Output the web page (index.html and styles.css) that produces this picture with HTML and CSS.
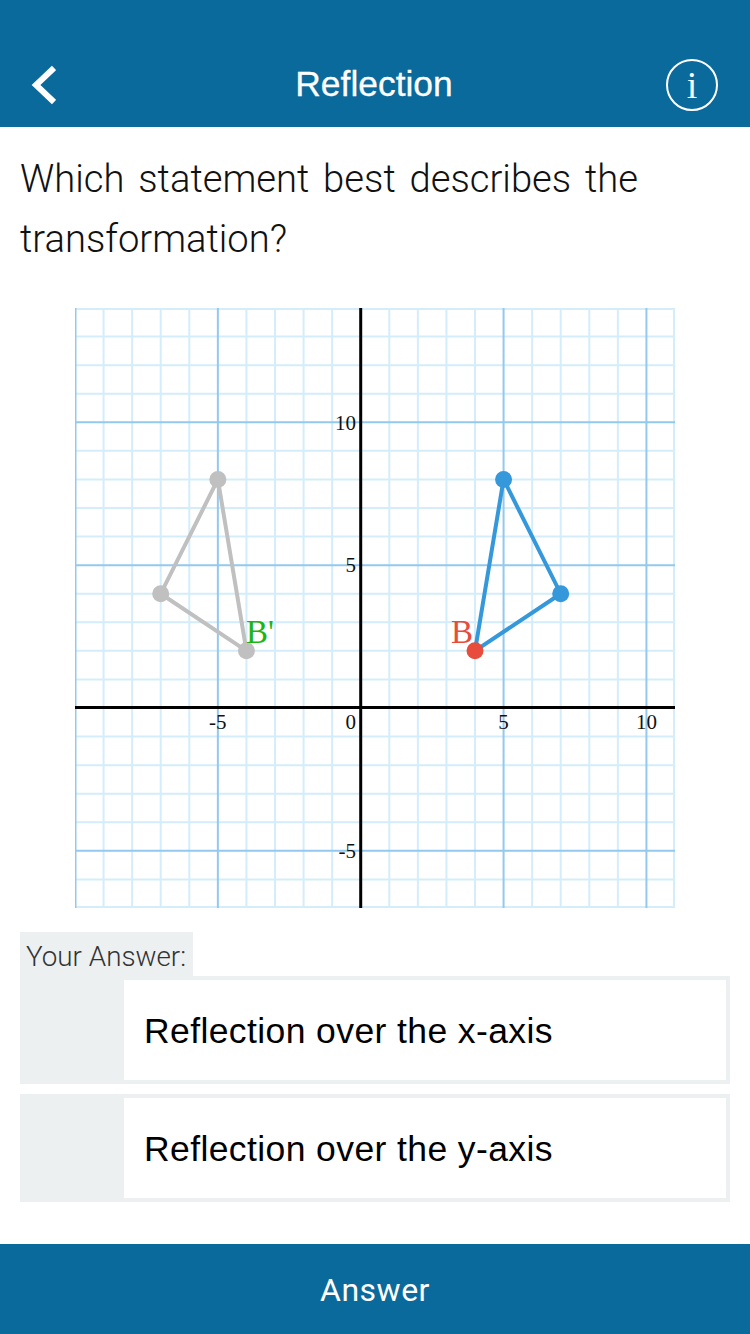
FILE: index.html
```html
<!DOCTYPE html>
<html lang="en">
<head>
    <meta charset="UTF-8">
    <meta name="viewport" content="width=device-width, initial-scale=1.0">
    <title>Reflection</title>
    <link rel="stylesheet" href="styles.css">
</head>
<body>
    <header class="topbar">
        <a class="back" href="#" aria-label="Back">
            <svg width="26" height="40" viewBox="0 0 26 40">
                <path d="M24 3 L6 20 L24 37" fill="none" stroke="#fff" stroke-width="6"/>
            </svg>
        </a>
        <h1 class="title">Reflection</h1>
        <a class="info" href="#" aria-label="Info">i</a>
    </header>

    <main class="content">
        <p class="question">Which statement best describes the transformation?</p>

        <svg class="graph" width="600" height="600" viewBox="0 0 600 600">
            <!-- minor grid, one square per unit -->
            <path class="grid-minor" d="M28.57 0V600M57.14 0V600M85.71 0V600M114.29 0V600M171.43 0V600M200 0V600M228.57 0V600M257.14 0V600M314.29 0V600M342.86 0V600M371.43 0V600M400 0V600M457.14 0V600M485.71 0V600M514.29 0V600M542.86 0V600M599 0V600"/>
            <path class="grid-minor" d="M0 1H600M0 28.57H600M0 57.14H600M0 85.71H600M0 142.86H600M0 171.43H600M0 200H600M0 228.57H600M0 285.71H600M0 314.29H600M0 342.86H600M0 371.43H600M0 428.57H600M0 457.14H600M0 485.71H600M0 514.29H600M0 571.43H600M0 599H600"/>
            <!-- every five units -->
            <path class="grid-major" d="M0.500 0V600M142.86 0V600M428.57 0V600M571.43 0V600M0 114.29H600M0 257.14H600M0 542.86H600"/>
            <path class="axis" d="M285.71 0V600M0 399.500H600"/>

            <text class="tick" x="142.86" y="421" text-anchor="middle">-5</text>
            <text class="tick" x="281" y="421" text-anchor="end">0</text>
            <text class="tick" x="428.57" y="421" text-anchor="middle">5</text>
            <text class="tick" x="571.43" y="421" text-anchor="middle">10</text>
            <text class="tick" x="281" y="122" text-anchor="end">10</text>
            <text class="tick" x="281" y="264" text-anchor="end">5</text>
            <text class="tick" x="281" y="550" text-anchor="end">-5</text>

            <polygon class="shape-image" points="142.86,171.43 85.71,285.71 171.43,342.86"/>
            <circle class="dot-image" cx="142.86" cy="171.43" r="8.500"/>
            <circle class="dot-image" cx="85.71" cy="285.71" r="8.500"/>
            <circle class="dot-image" cx="171.43" cy="342.86" r="8.500"/>
            <text class="point-label label-image" x="171" y="335">B'</text>

            <polygon class="shape-orig" points="428.57,171.43 485.71,285.71 400,342.86"/>
            <circle class="dot-orig" cx="428.57" cy="171.43" r="8.500"/>
            <circle class="dot-orig" cx="485.71" cy="285.71" r="8.500"/>
            <circle class="dot-start" cx="400" cy="342.86" r="8.500"/>
            <text class="point-label label-orig" x="376" y="335">B</text>
        </svg>

        <div class="answer-label">Your Answer:</div>
        <div class="option">
            <div class="option-text">Reflection over the x-axis</div>
        </div>
        <div class="option">
            <div class="option-text">Reflection over the y-axis</div>
        </div>
    </main>

    <button class="answer-btn" type="button">Answer</button>
</body>
</html>
```

FILE: styles.css
```css
* {
    box-sizing: border-box;
}
body {
    margin: 0;
    width: 750px;
    height: 1334px;
    display: flex;
    flex-direction: column;
    background-color: #fff;
    font-family: "Liberation Sans", Arial, sans-serif;
    overflow: hidden;
}
.topbar {
    height: 127px;
    padding: 40px 32px 0 30px;
    display: grid;
    grid-template-columns: 1fr auto 1fr;
    align-items: center;
    background-color: #0b6a9c;
    color: #fff;
}
.back {
    display: flex;
}
.title {
    margin: 0;
    font-size: 35.4px;
    font-weight: 400;
    line-height: 89px;
    -webkit-text-stroke: 0.3px #fff;
}
.info {
    justify-self: end;
    width: 52px;
    height: 52px;
    border: 2px solid #fff;
    border-radius: 50%;
    display: flex;
    align-items: center;
    justify-content: center;
    color: #fff;
    font-family: "Liberation Serif", serif;
    font-size: 38px;
    text-decoration: none;
}
.content {
    flex: 1;
    padding: 22px 20px 0;
}
.question {
    margin: 0 0 39px;
    font-family: Roboto, "Liberation Sans", sans-serif;
    font-weight: 300;
    font-size: 38.2px;
    word-spacing: 4.5px;
    line-height: 60px;
    color: #111;
}
.graph {
    display: block;
    margin: 0 0 24px 55px;
}
.grid-minor {
    fill: none;
    stroke: #d4edfa;
    stroke-width: 2;
}
.grid-major {
    fill: none;
    stroke: #93c9ee;
    stroke-width: 2;
}
.axis {
    fill: none;
    stroke: #000;
    stroke-width: 3;
}
.tick {
    font-family: "Liberation Serif", serif;
    font-size: 21px;
    fill: #111;
}
.point-label {
    font-family: "Liberation Serif", serif;
    font-size: 33px;
}
.label-image {
    fill: #1fb50f;
}
.label-orig {
    fill: #e74c3c;
}
.shape-image {
    fill: none;
    stroke: #c0c0c0;
    stroke-width: 4;
}
.shape-orig {
    fill: none;
    stroke: #3498db;
    stroke-width: 4;
}
.dot-image {
    fill: #c0c0c0;
}
.dot-orig {
    fill: #3498db;
}
.dot-start {
    fill: #e74c3c;
}
.answer-label {
    width: 173px;
    height: 44px;
    padding-left: 6px;
    background-color: #ecf0f1;
    font-family: Roboto, "Liberation Sans", sans-serif;
    font-weight: 300;
    font-size: 27.8px;
    line-height: 49px;
    color: #333;
}
.option {
    height: 108px;
    padding: 4px 4px 4px 104px;
    margin-bottom: 10px;
    background-color: #ecf0f1;
}
.option-text {
    height: 100%;
    padding: 3px 0 0 20px;
    display: flex;
    align-items: center;
    background-color: #fff;
    font-size: 35.5px;
    letter-spacing: 0.4px;
    color: #000;
}
.answer-btn {
    height: 90px;
    padding-top: 2px;
    border: none;
    background-color: #0b6a9c;
    color: #fff;
    font-family: Roboto, "Liberation Sans", sans-serif;
    font-size: 32px;
    letter-spacing: 0.5px;
}
```
